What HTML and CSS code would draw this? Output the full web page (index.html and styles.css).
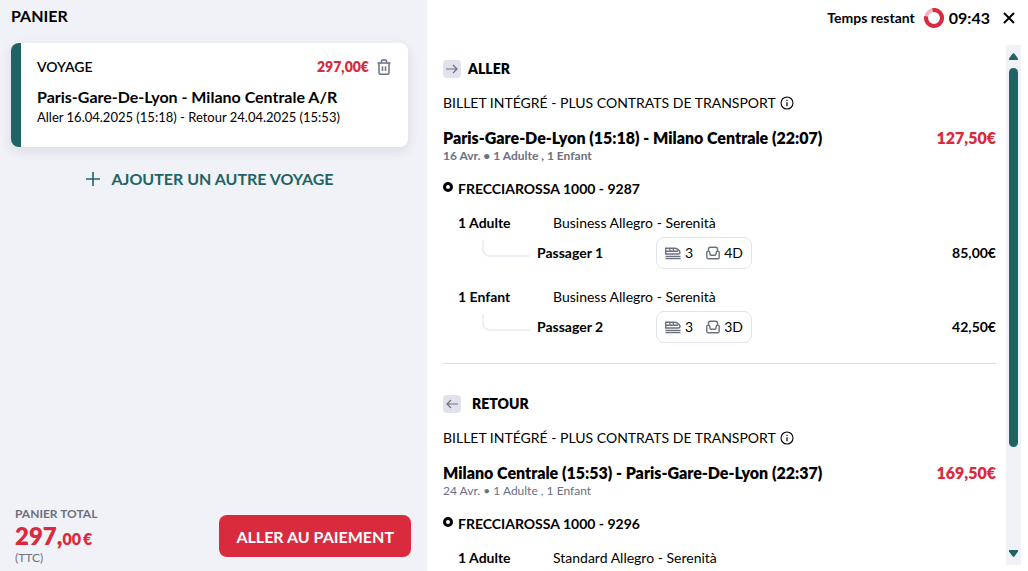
FILE: index.html
```html
<!DOCTYPE html>
<html lang="fr">
    <head>
        <meta charset="utf-8">
        <meta name="viewport" content="width=device-width, initial-scale=1">
        <title>Panier</title>
        <link rel="stylesheet" href="styles.css">
    </head>
    <body>
        <svg class="sprite" aria-hidden="true">
            <symbol id="train" viewBox="0 0 16 14">
                <path d="M.7 2.200h8.500c2.800 0 5.800 2.200 5.800 4.200 0 1-.7 1.500-1.700 1.500H.7zM.7 5.200h12.500" fill="none" stroke="currentColor" stroke-width="1.500"/>
                <path d="M4 2l1.500 3M7.500 2L9 5" stroke="currentColor" stroke-width="1.200"/>
                <path d="M.5 10.500H15.500M.5 12.600H15.500" stroke="currentColor" stroke-width="1.400"/>
            </symbol>
            <symbol id="seat" viewBox="0 0 14 14">
                <path d="M2.500 5.500V3.200c0-1.200.6-1.900 1.800-1.900h5.400c1.200 0 1.800.7 1.800 1.900v2.300" fill="none" stroke="currentColor" stroke-width="1.500"/>
                <path d="M.8 6.200c0-.5.300-.8.800-.8h1.200c.5 0 .8.300.9.800l.4 2.100c.1.700.5 1 1.200 1h3.400c.7 0 1.100-.3 1.200-1l.4-2.100c.1-.5.4-.8.900-.8h1.200c.5 0 .8.300.8.800v5c0 1-.6 1.600-1.600 1.600H2.400c-1 0-1.600-.6-1.600-1.600z" fill="none" stroke="currentColor" stroke-width="1.400"/>
            </symbol>
            <symbol id="info" viewBox="0 0 14 14">
                <circle cx="7" cy="7" r="6" fill="none" stroke="currentColor" stroke-width="1.100"/>
                <path d="M7 6.200v4M7 3.800v1.200" stroke="currentColor" stroke-width="1.200"/>
            </symbol>
        </svg>

        <main class="page">
            <section class="cart">
                <h1>PANIER</h1>
                <article class="trip">
                    <div class="trip-top">
                        <h2>VOYAGE</h2>
                        <span class="trip-price">297,00€</span>
                        <button type="button" class="icon-btn trash" aria-label="Supprimer">
                            <svg width="14" height="16" viewBox="0 0 14 16" fill="none" stroke="currentColor" stroke-width="1.500">
                                <path d="M.5 4h13M4 4l.6-2.300c.1-.4.3-.6.7-.6h3.400c.4 0 .6.200.7.600L10 4M2 4v9.700c0 .9.500 1.500 1.400 1.500h7.200c.9 0 1.400-.6 1.400-1.500V4M5.500 7.500V12M8.500 7.500V12"/>
                            </svg>
                        </button>
                    </div>
                    <p class="trip-name">Paris-Gare-De-Lyon - Milano Centrale A/R</p>
                    <p class="trip-dates">Aller 16.04.2025 (15:18) - Retour 24.04.2025 (15:53)</p>
                </article>
                <button type="button" class="add">
                    <svg width="14" height="14" viewBox="0 0 14 14" stroke="currentColor" stroke-width="1.600" aria-hidden="true"><path d="M7 0v14M0 7h14"/></svg>
                    AJOUTER UN AUTRE VOYAGE
                </button>
                <div class="checkout">
                    <div class="total">
                        <p class="total-label">PANIER TOTAL</p>
                        <p class="total-price">297,<span>00</span><span class="euro">€</span></p>
                        <p class="total-tax">(TTC)</p>
                    </div>
                    <button type="button" class="pay">ALLER AU PAIEMENT</button>
                </div>
            </section>

            <section class="details">
                <header class="timer">
                    <span class="timer-label">Temps restant</span>
                    <svg width="20" height="20" viewBox="0 0 20 20" fill="none" stroke-width="4" aria-hidden="true">
                        <circle cx="10" cy="10" r="8" stroke="#f5b5bf"/>
                        <path d="M8.600 2.100A8 8 0 1 1 2.200 8.300" stroke="#da2a3d"/>
                    </svg>
                    <span class="timer-time">09:43</span>
                    <button type="button" class="icon-btn close" aria-label="Fermer">
                        <svg width="12" height="12" viewBox="0 0 12 12" stroke="currentColor" stroke-width="2"><path d="M1 1l10 10M11 1L1 11"/></svg>
                    </button>
                </header>

                <div class="scroller">
                    <div class="legs">
                        <article class="leg">
                            <h2 class="direction">
                                <span class="arrow"><svg width="12" height="10" viewBox="0 0 12 10" fill="none" stroke="currentColor" stroke-width="1.200"><path d="M0 5h11M7 1l4 4-4 4"/></svg></span>
                                ALLER
                            </h2>
                            <p class="contract">BILLET INTÉGRÉ - PLUS CONTRATS DE TRANSPORT <svg width="14" height="14" aria-hidden="true"><use href="#info"/></svg></p>
                            <div class="route">
                                <h3>Paris-Gare-De-Lyon (15:18) - Milano Centrale (22:07)</h3>
                                <span class="route-price">127,50€</span>
                            </div>
                            <p class="when strong">16 Avr. • 1 Adulte , 1 Enfant</p>
                            <p class="train"><span class="dot"></span>FRECCIAROSSA 1000 - 9287</p>
                            <div class="group">
                                <div class="fare"><b>1 Adulte</b><span>Business Allegro - Serenità</span></div>
                                <div class="passenger">
                                    <span class="elbow"></span>
                                    <b class="name">Passager 1</b>
                                    <span class="seat">
                                        <svg width="16" height="14" aria-hidden="true"><use href="#train"/></svg>3
                                        <svg class="chair" width="14" height="14" aria-hidden="true"><use href="#seat"/></svg>4D
                                    </span>
                                    <b class="price">85,00€</b>
                                </div>
                            </div>
                            <div class="group">
                                <div class="fare"><b>1 Enfant</b><span>Business Allegro - Serenità</span></div>
                                <div class="passenger">
                                    <span class="elbow"></span>
                                    <b class="name">Passager 2</b>
                                    <span class="seat">
                                        <svg width="16" height="14" aria-hidden="true"><use href="#train"/></svg>3
                                        <svg class="chair" width="14" height="14" aria-hidden="true"><use href="#seat"/></svg>3D
                                    </span>
                                    <b class="price">42,50€</b>
                                </div>
                            </div>
                        </article>

                        <article class="leg">
                            <h2 class="direction back">
                                <span class="arrow"><svg width="12" height="10" viewBox="0 0 12 10" fill="none" stroke="currentColor" stroke-width="1.200"><path d="M12 5H1M5 1L1 5l4 4"/></svg></span>
                                RETOUR
                            </h2>
                            <p class="contract">BILLET INTÉGRÉ - PLUS CONTRATS DE TRANSPORT <svg width="14" height="14" aria-hidden="true"><use href="#info"/></svg></p>
                            <div class="route">
                                <h3>Milano Centrale (15:53) - Paris-Gare-De-Lyon (22:37)</h3>
                                <span class="route-price">169,50€</span>
                            </div>
                            <p class="when">24 Avr. • 1 Adulte , 1 Enfant</p>
                            <p class="train"><span class="dot"></span>FRECCIAROSSA 1000 - 9296</p>
                            <div class="group">
                                <div class="fare"><b>1 Adulte</b><span>Standard Allegro - Serenità</span></div>
                            </div>
                        </article>
                    </div>
                    <div class="bar" aria-hidden="true">
                        <svg width="9" height="7" viewBox="0 0 9 7"><path d="M3.500.8q1-1.200 2 0L9 5.500V7H0V5.500z"/></svg>
                        <div class="track"><div class="thumb"></div></div>
                        <svg width="9" height="7" viewBox="0 0 9 7"><path d="M3.500 6.200q1 1.200 2 0L9 1.500V0H0v1.500z"/></svg>
                    </div>
                </div>
            </section>
        </main>
    </body>
</html>
```
FILE: styles.css
```css
*{
    box-sizing: border-box;
}
body, h1, h2, h3, p{
    margin: 0;
}
body{
    font-family: Lato, "Liberation Sans", sans-serif;
    font-size: 14px;
    line-height: 20px;
    color: #000;
    background-color: #fff;
}
button{
    font-family: inherit;
    border: none;
    padding: 0;
    cursor: pointer;
}
.sprite{
    position: absolute;
    width: 0;
    height: 0;
}
.page{
    display: grid;
    grid-template-columns: 427fr 601fr;
    height: 100vh;
}

/* left side */
.cart{
    display: flex;
    flex-direction: column;
    background-color: #f1f2f7;
    padding: 6px 16px 5px 11px;
}
h1{
    font-size: 16px;
    line-height: 20px;
    font-weight: 700;
}
.trip{
    margin: 17px 3px 0 0;
    padding: 14px 17px 20px 16px;
    border-left: 10px solid #1f6464;
    border-radius: 8px;
    background-color: #fff;
    box-shadow: 0 4px 12px rgba(60, 60, 90, 0.12);
}
.trip-top{
    display: flex;
    align-items: center;
}
.trip-top h2{
    flex: 1;
    font-size: 14px;
    font-weight: 600;
}
.trip-price{
    font-weight: 800;
    color: #da2a3d;
}
.icon-btn{
    display: flex;
    background: none;
    color: #000;
}
.trash{
    margin-left: 8px;
    color: #6c7080;
}
.trip-name{
    margin-top: 9px;
    font-size: 16px;
    line-height: 21px;
    font-weight: 700;
}
.trip-dates{
    font-size: 13px;
}
.add{
    display: flex;
    align-items: center;
    align-self: center;
    gap: 11px;
    margin: 22px 2px 0 0;
    background: none;
    color: #1f6464;
    font-size: 16px;
    line-height: 20px;
    font-weight: 700;
}
.checkout{
    display: flex;
    align-items: center;
    justify-content: space-between;
    margin-top: auto;
    padding-left: 4px;
}
.total{
    color: #6c7080;
    font-size: 12px;
    line-height: 16px;
}
.total-label{
    font-weight: 700;
}
.total-price{
    color: #da2a3d;
    font-size: 24px;
    line-height: 28px;
    font-weight: 800;
}
.total-price span{
    font-size: 16px;
    line-height: 16px;
}
.total-price .euro{
    margin-left: 2px;
}
.pay{
    height: 42px;
    padding: 0 17px;
    border-radius: 8px;
    background-color: #da2a3d;
    color: #fff;
    font-size: 16px;
    font-weight: 700;
}

/* right side */
.details{
    display: flex;
    flex-direction: column;
    min-height: 0;
    height: 100vh;
    padding: 7px 7px 6px 16px;
}
.timer{
    display: flex;
    align-items: center;
    justify-content: flex-end;
    height: 22px;
    margin-bottom: 16px;
    padding-right: 6px;
}
.timer-label{
    font-weight: 700;
    margin-right: 9px;
}
.timer-time{
    margin-left: 5px;
    font-size: 16px;
    font-weight: 700;
}
.close{
    margin-left: 13px;
}
.scroller{
    display: flex;
    flex: 1;
    gap: 10px;
    min-height: 0;
}
.legs{
    flex: 1;
    overflow: hidden;
}
.leg{
    padding: 14px 0 20px;
    border-bottom: 1px solid #dcdcde;
}
.leg + .leg{
    margin-top: 16px;
}
.direction{
    display: flex;
    align-items: center;
    gap: 7px;
    font-size: 14px;
    font-weight: 800;
}
.back{
    gap: 11px;
}
.arrow{
    display: grid;
    place-items: center;
    width: 18px;
    height: 18px;
    border-radius: 4px;
    background-color: #e0e3ed;
    color: #6c7080;
}
.contract{
    display: flex;
    align-items: center;
    gap: 4px;
    margin-top: 14px;
}
.route{
    display: flex;
    justify-content: space-between;
    margin-top: 15px;
    font-size: 16px;
}
.route h3{
    font-size: 16px;
    font-weight: 800;
}
.route-price{
    color: #da2a3d;
    font-weight: 800;
}
.when{
    color: #6c7080;
    font-size: 12px;
    line-height: 16px;
}
.strong{
    font-weight: 700;
}
.train{
    display: flex;
    gap: 5px;
    margin-top: 15px;
    font-weight: 700;
}
.dot{
    width: 10px;
    height: 10px;
    margin-top: 3px;
    border: 3px solid #000;
    border-radius: 50%;
}
.group{
    margin-top: 14px;
    padding-left: 15px;
}
.group + .group{
    margin-top: 18px;
}
b{
    font-weight: 700;
}
.fare{
    display: grid;
    grid-template-columns: 95px 1fr;
}
.passenger{
    display: flex;
    align-items: center;
    margin-top: 4px;
    padding-left: 24px;
}
.elbow{
    width: 48px;
    height: 17px;
    align-self: flex-start;
    margin-top: 3px;
    border: solid #eeeef6;
    border-width: 0 0 2px 2px;
    border-bottom-left-radius: 8px;
}
.name{
    width: 119px;
    margin-left: 7px;
}
.seat{
    display: flex;
    align-items: center;
    gap: 4px;
    height: 32px;
    padding: 0 8px;
    border: 1px solid #e0e3ee;
    border-radius: 8px;
}
.seat svg{
    color: #6c7080;
}
.seat .chair{
    margin-left: 9px;
}
.price{
    margin-left: auto;
}

/* scroll bar */
.bar{
    display: flex;
    flex-direction: column;
    align-items: center;
    gap: 8px;
    width: 15px;
    padding: 8px 0;
    background-color: #f1f2f7;
    fill: #1f6464;
}
.track{
    flex: 1;
    width: 9px;
}
.thumb{
    height: 80%;
    border-radius: 5px;
    background-color: #1f6464;
}
```
